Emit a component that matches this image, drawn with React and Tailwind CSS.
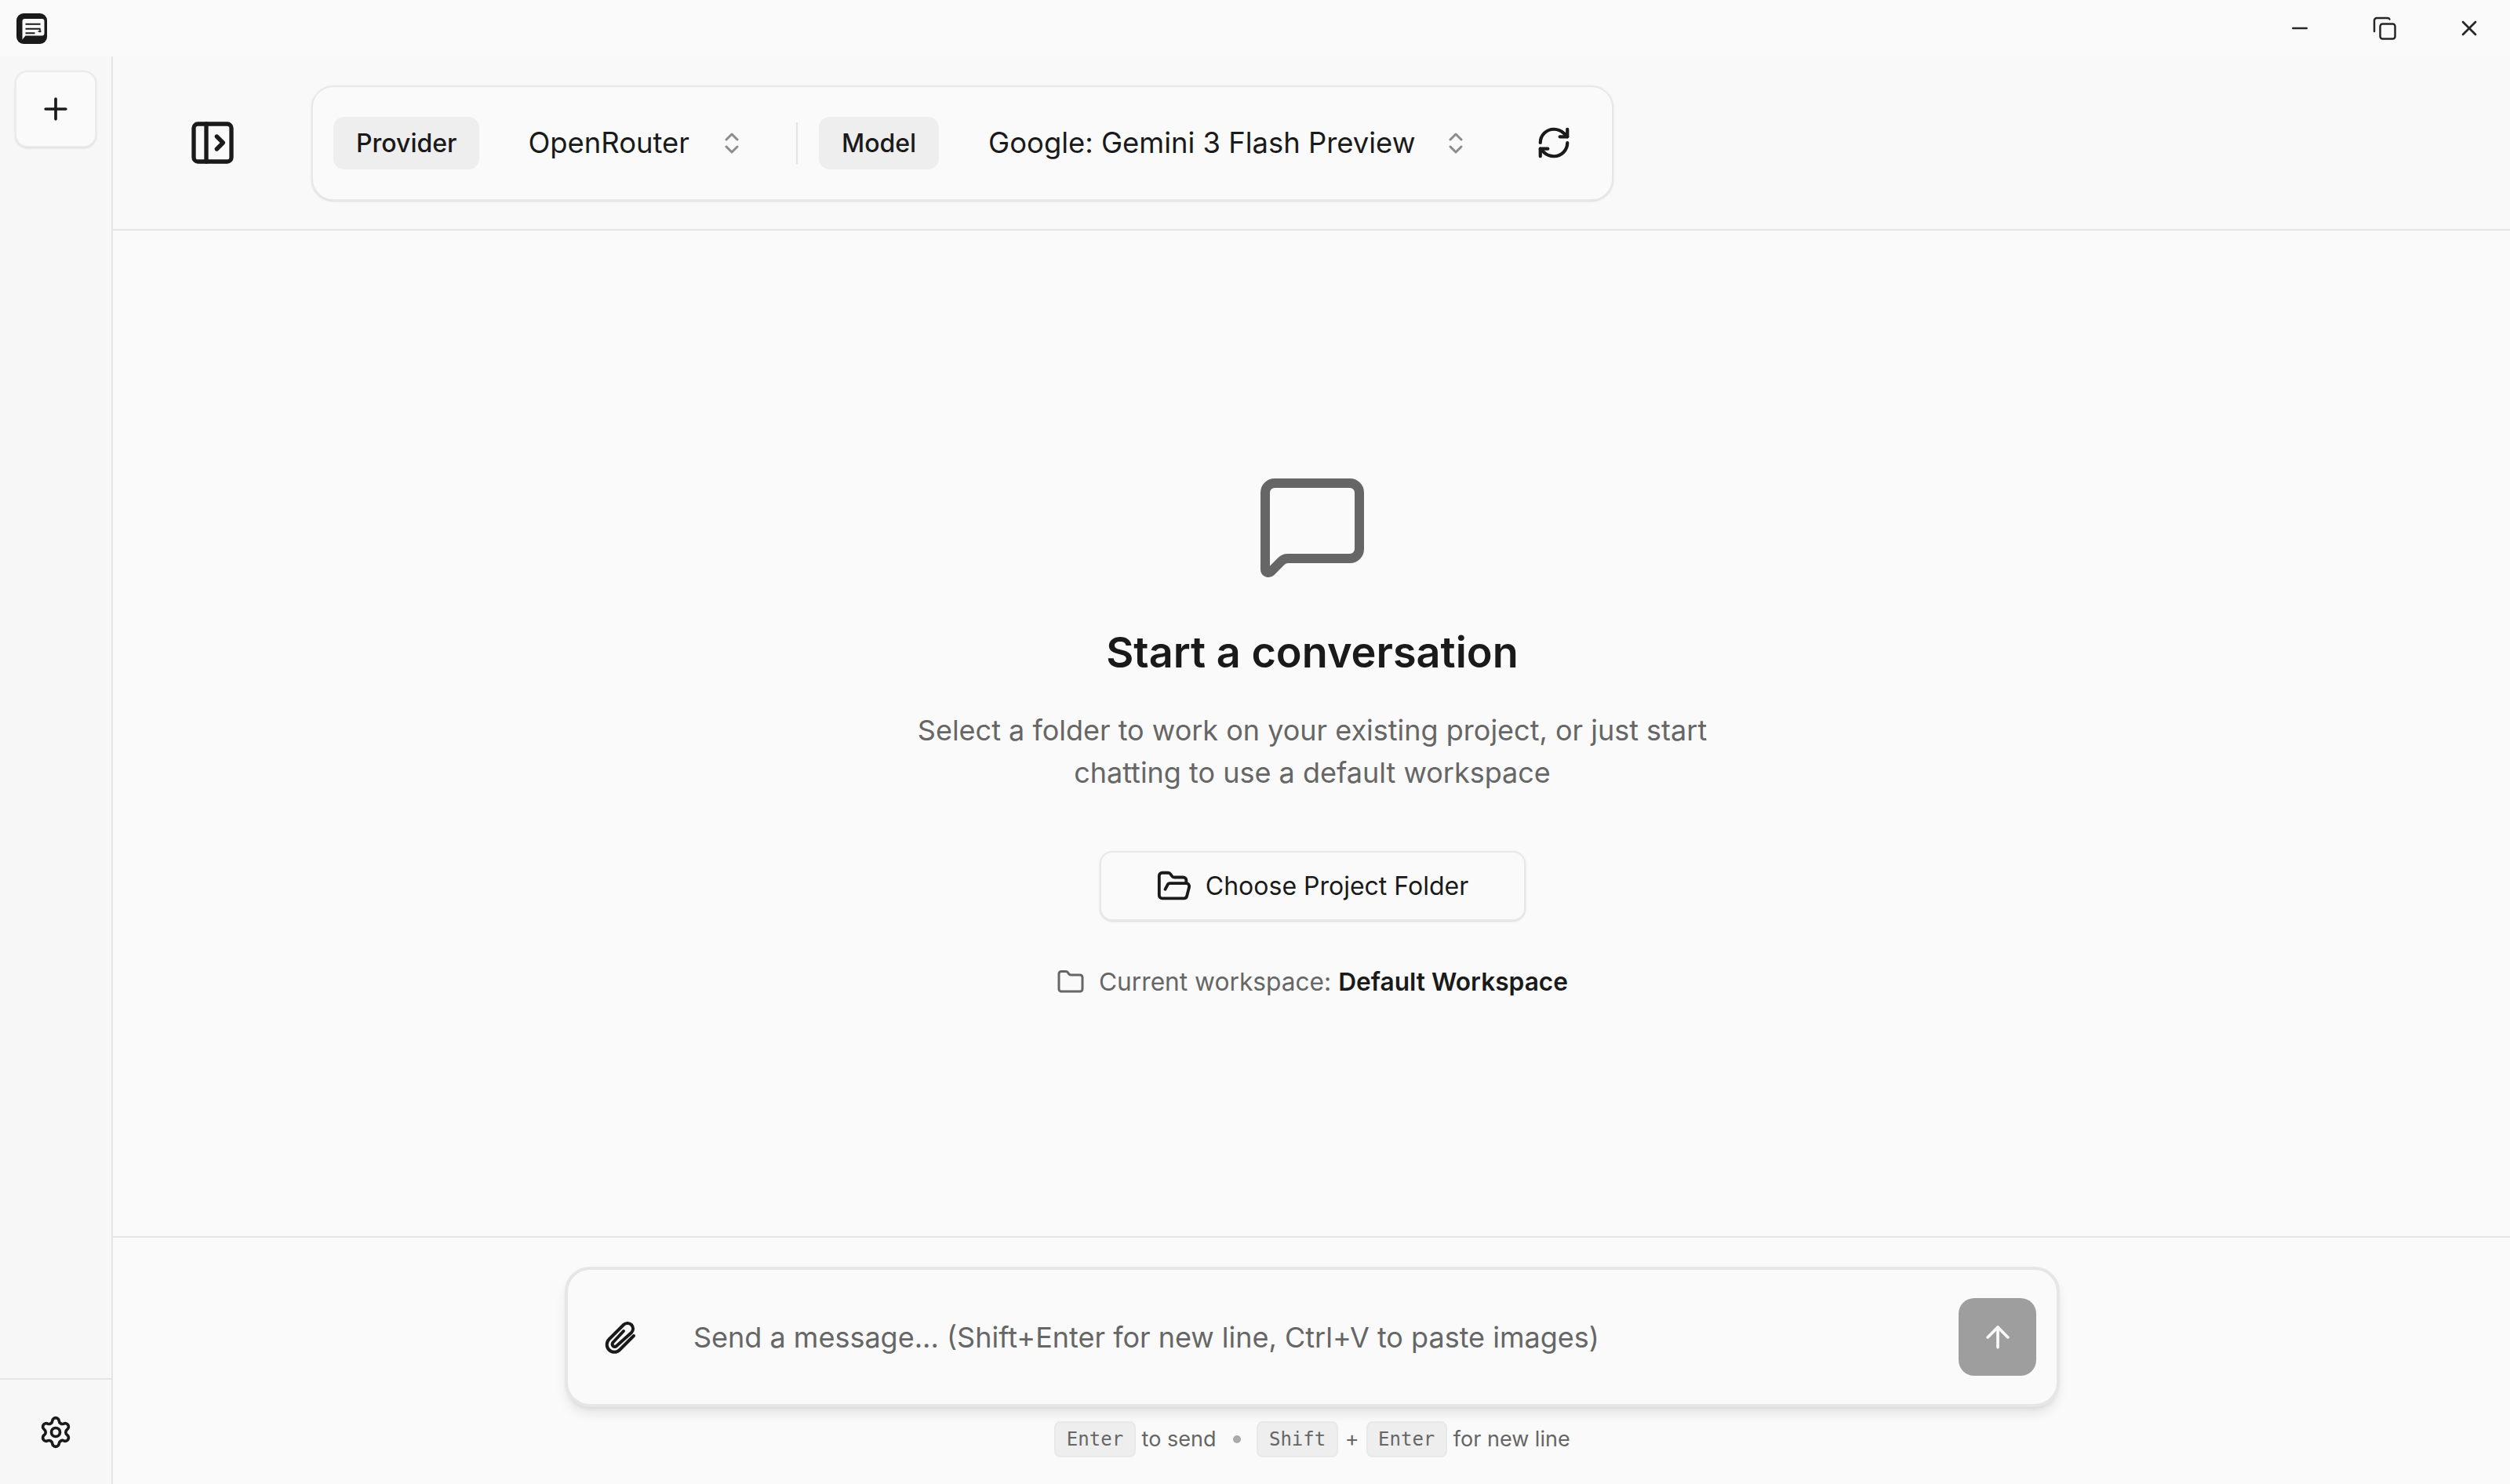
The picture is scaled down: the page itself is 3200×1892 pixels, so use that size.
import React from "react";
import {
  ArrowUp,
  Folder,
  FolderOpen,
  MessageSquare,
  Minus,
  PanelLeftOpen,
  Plus,
  RefreshCw,
  Settings,
  X,
} from "lucide-react";

const Logo = () => (
  <svg width="39" height="39" viewBox="0 0 39 39">
    <rect width="39" height="39" rx="9" fill="#1a1a1a" />
    <path
      d="M7.5 10a3 3 0 0 1 3-3h22a3 3 0 0 1 3 3v15.5a3 3 0 0 1-3 3H11.5l-4 5z"
      fill="#fafafa"
    />
    <path
      d="M11.5 13.7h19M11.5 19.7h19M11.5 25.3h12"
      stroke="#1a1a1a"
      strokeWidth="2"
      fill="none"
    />
    <path d="M30 19.7v4.5M27.5 23h4" stroke="#1a1a1a" strokeWidth="1.5" fill="none" />
  </svg>
);

const RestoreIcon = () => (
  <svg width="30" height="30" viewBox="0 0 30 30" fill="none" stroke="#262626" strokeWidth="2.5" strokeLinecap="round" strokeLinejoin="round">
    <rect x="9.5" y="9.5" width="19" height="19" rx="3" />
    <path d="M2 19V5a3 3 0 0 1 3-3h14a3 3 0 0 1 2.5 1.5" />
  </svg>
);

const UpDown = () => (
  <svg width="18" height="27" viewBox="0 0 18 27" fill="none" stroke="#8c8c8c" strokeWidth="3" strokeLinecap="round" strokeLinejoin="round">
    <path d="M2 9l7-7 7 7" />
    <path d="M2 18l7 7 7-7" />
  </svg>
);

const Clip = () => (
  <svg width="42" height="44" viewBox="0 0 42 44" fill="none" stroke="#1a1a1a" strokeWidth="4" strokeLinecap="round" strokeLinejoin="round">
    <path d="M37 20L19 38a9.5 9.5 0 0 1-13.5-13.5L24 6a7 7 0 0 1 10 10L15 33a3 3 0 0 1-4.5-4.5L24 14" />
  </svg>
);

const Pill = ({ children }) => (
  <span className="flex h-[67px] items-center rounded-[14px] bg-[#eeeeee] px-[29px] pt-[2px] text-[32px] font-medium text-[#1a1a1a]">
    {children}
  </span>
);

const Kbd = ({ children }) => (
  <kbd className="flex h-[46px] items-center rounded-[8px] border-2 border-[#e8e8e8] bg-[#eeeeee] px-[13.5px] font-['DejaVu_Sans_Mono',monospace] text-[24px] text-[#666666]">
    {children}
  </kbd>
);

const App = () => {
  return (
    <div className="flex h-[1892px] w-[3200px] flex-col overflow-hidden bg-[#fafafa] font-['Inter',sans-serif] text-[#1a1a1a]">
      {/* Title bar */}
      <div className="flex h-[72px] shrink-0 items-center pl-[21px]">
        <Logo />
        <div className="ml-auto flex items-center">
          <Minus size={30} strokeWidth={2} color="#262626" className="mr-[78px]" />
          <RestoreIcon />
          <X size={32} strokeWidth={2} color="#262626" className="ml-[77px] mr-[36px]" />
        </div>
      </div>

      <div className="flex min-h-0 flex-1">
        {/* Sidebar */}
        <aside className="flex w-[144px] shrink-0 flex-col border-r-2 border-[#e5e5e5] bg-[#f7f7f7]">
          <div className="flex-1 pl-[19px] pt-[18px]">
            <button className="flex h-[98px] w-[104px] items-center justify-center rounded-[16px] border-2 border-[#ebebeb] bg-[#fafafa] shadow-sm">
              <Plus size={44} strokeWidth={2} />
            </button>
          </div>
          <div className="flex h-[135px] items-center justify-center border-t-2 border-[#e5e5e5]">
            <Settings size={44} strokeWidth={2} />
          </div>
        </aside>

        <main className="flex min-w-0 flex-1 flex-col">
          {/* Provider and model bar */}
          <header className="flex h-[222px] shrink-0 items-center border-b-2 border-[#e5e5e5] bg-[#f9f9f9] pl-[95px]">
            <PanelLeftOpen size={64} strokeWidth={2} />
            <div className="ml-[94px] flex h-[147px] w-[1660px] items-center rounded-[28px] border-2 border-[#e8e8e8] bg-[#fafafa] pl-[26px] shadow-sm">
              <Pill>Provider</Pill>
              <span className="ml-[62px] text-[36.4px]">OpenRouter</span>
              <span className="ml-[45px] flex"><UpDown /></span>
              <span className="ml-[73px] h-[53px] w-[2px] bg-[#e5e5e5]" />
              <span className="ml-[27px] flex"><Pill>Model</Pill></span>
              <span className="ml-[63px] text-[36.4px]">Google: Gemini 3 Flash Preview</span>
              <span className="ml-[43px] flex"><UpDown /></span>
              <RefreshCw size={46} strokeWidth={2.2} className="ml-[93px]" />
            </div>
          </header>

          {/* Empty state */}
          <section className="flex flex-1 flex-col items-center pl-[2px] pt-[304px]">
            <MessageSquare size={144} strokeWidth={2} color="#666666" />
            <h1 className="mt-[58px] text-[54px] font-semibold leading-[64px]">Start a conversation</h1>
            <p className="mt-[40px] w-[1100px] text-center text-[36px] leading-[54px] text-[#666666]">
              Select a folder to work on your existing project, or just start
              <br />
              chatting to use a default workspace
            </p>
            <button className="mt-[73px] flex h-[89px] w-[543px] items-center justify-center gap-[17px] rounded-[16px] border-2 border-[#e8e8e8] bg-[#fafafa] text-[32px] shadow-sm">
              <FolderOpen size={46} strokeWidth={2} />
              Choose Project Folder
            </button>
            <div className="mt-[54px] flex items-center gap-[18px] text-[31.7px] text-[#666666]">
              <Folder size={36} strokeWidth={2} />
              <span>
                Current workspace: <strong className="font-semibold text-[#1a1a1a]">Default Workspace</strong>
              </span>
            </div>
          </section>

          {/* Message box */}
          <footer className="flex h-[316px] shrink-0 flex-col items-center border-t-2 border-[#e5e5e5] pl-[2px] pt-[37px]">
            <div className="flex h-[179px] w-[1906px] items-center rounded-[32px] border-4 border-[#e6e6e6] bg-[#fafafa] pl-[47px] pr-[26px] shadow-lg">
              <Clip />
              <input
                readOnly
                placeholder="Send a message... (Shift+Enter for new line, Ctrl+V to paste images)"
                className="ml-[71px] min-w-0 flex-1 bg-transparent text-[36px] outline-none placeholder:text-[#666666]"
              />
              <button className="flex h-[99px] w-[99px] items-center justify-center rounded-[20px] bg-[#9e9e9e]">
                <ArrowUp size={44} strokeWidth={2} color="#fafafa" />
              </button>
            </div>
            <div className="mt-[18px] flex items-center text-[27px] text-[#666666]">
              <Kbd>Enter</Kbd>
              <span className="ml-[8px]">to send</span>
              <span className="ml-[22px] h-[10px] w-[10px] rounded-full bg-[#aaaaaa]" />
              <span className="ml-[20px] flex"><Kbd>Shift</Kbd></span>
              <span className="mx-[9px]">+</span>
              <Kbd>Enter</Kbd>
              <span className="ml-[8px]">for new line</span>
            </div>
          </footer>
        </main>
      </div>
    </div>
  );
};

export default App;
